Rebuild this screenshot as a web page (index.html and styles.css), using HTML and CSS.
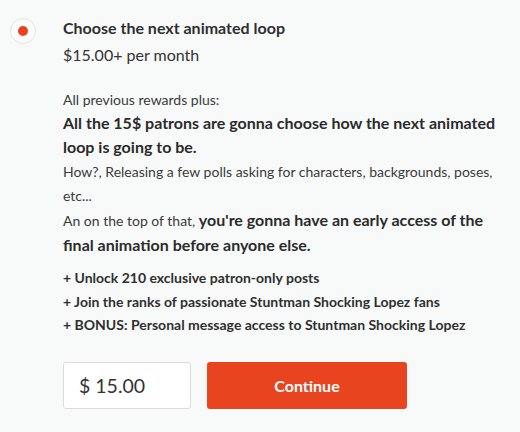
FILE: index.html
```html
<!DOCTYPE html>
<html>
<head>
<meta charset="utf-8">
<link rel="stylesheet" href="styles.css">
</head>
<body>
<div class="tier">
  <div class="radio-col">
    <span class="radio"><span class="dot"></span></span>
  </div>
  <div class="content">
    <div class="title">Choose the next animated loop</div>
    <div class="price">$15.00+ per month</div>
    <div class="desc">
      <p class="small">All previous rewards plus:</p>
      <p class="big">All the 15$ patrons are gonna choose how the next animated loop is going to be.</p>
      <p class="small">How?, Releasing a few polls asking for characters, backgrounds, poses, etc...</p>
      <p class="small">An on the top of that, <strong class="big">you're gonna have an early access of the final animation before anyone else.</strong></p>
    </div>
    <ul class="perks">
      <li>+ Unlock 210 exclusive patron-only posts</li>
      <li>+ Join the ranks of passionate Stuntman Shocking Lopez fans</li>
      <li>+ BONUS: Personal message access to Stuntman Shocking Lopez</li>
    </ul>
    <div class="actions">
      <div class="amount">$ 15.00</div>
      <button class="continue">Continue</button>
    </div>
  </div>
</div>
</body>
</html>
```

FILE: styles.css
```css
html, body {
  margin: 0;
  padding: 0;
  background: #f8fafa;
}
body {
  font-family: Lato, "Open Sans", sans-serif;
  color: #2b2b2b;
}
.tier {
  display: flex;
  padding-top: 16px;
}
.radio-col {
  width: 63px;
  flex: none;
  padding-left: 10px;
  box-sizing: border-box;
  padding-top: 2px;
}
.radio {
  width: 26px;
  height: 26px;
  border: 1px solid #e4e4e4;
  border-radius: 50%;
  background: #fbfbfb;
  box-sizing: border-box;
  display: flex;
  align-items: center;
  justify-content: center;
}
.dot {
  width: 10px;
  height: 10px;
  border-radius: 50%;
  background: #e8441f;
}
.content {
  flex: 1;
  padding-right: 22px;
}
.title {
  font-size: 16px;
  font-weight: 700;
  line-height: 24px;
  color: #2f2f2f;
}
.price {
  font-size: 16px;
  line-height: 24px;
  margin-top: 3px;
  color: #333;
}
.desc {
  margin-top: 21px;
  line-height: 24.2px;
}
.desc p {
  margin: 0;
}
.desc p.big {
  margin-top: -1px;
}
.small {
  font-size: 14px;
  color: #3a3a3a;
}
.big {
  font-size: 16px;
  font-weight: 700;
  color: #2b2b2b;
}
.perks {
  list-style: none;
  margin: 8px 0 0;
  padding: 0;
}
.perks li {
  font-size: 14px;
  font-weight: 700;
  line-height: 23.4px;
  color: #2f2f2f;
}
.actions {
  display: flex;
  gap: 16px;
  margin-top: 25px;
}
.amount {
  width: 128px;
  height: 47px;
  box-sizing: border-box;
  border: 1px solid #dcdcdc;
  border-radius: 3px;
  background: #fff;
  font-size: 19.5px;
  color: #333;
  display: flex;
  align-items: center;
  padding-left: 15px;
}
.continue {
  width: 200px;
  height: 47px;
  border: none;
  border-radius: 3px;
  background: #e8441f;
  color: #fff;
  font-family: Lato, sans-serif;
  font-size: 16px;
  font-weight: 700;
  cursor: pointer;
}
```
